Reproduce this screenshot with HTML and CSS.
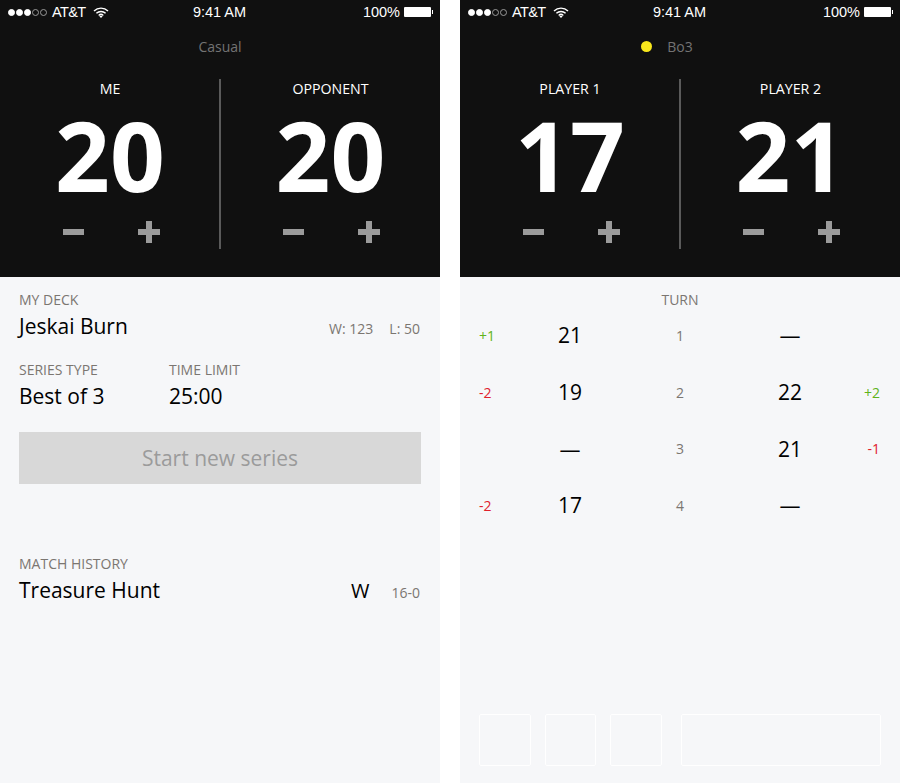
FILE: index.html
```html
<!DOCTYPE html>
<html lang="en">
<head>
  <meta charset="UTF-8">
  <title>Life Counter</title>
  <link rel="stylesheet" href="styles.css">
</head>
<body>
  <div class="phones">

    <div class="phone">
      <div class="top">
        <div class="status">
          <div class="status-left">
            <span class="signal"><i class="on"></i><i class="on"></i><i class="on"></i><i></i><i></i></span>
            <span class="carrier">AT&amp;T</span>
            <svg class="wifi" width="16" height="11" viewBox="0 0 16 11"><path d="M1 4 A10 10 0 0 1 15 4 M3.4 6.3 A6.6 6.6 0 0 1 12.6 6.3 M5.7 8.4 A3.3 3.3 0 0 1 10.3 8.4" fill="none" stroke="#fff" stroke-width="1.4"/><path d="M8 11 L6.4 9.3 A2.3 2.3 0 0 1 9.6 9.3 Z" fill="#fff"/></svg>
          </div>
          <div class="status-time">9:41 AM</div>
          <div class="status-right">
            <span>100%</span>
            <span class="battery"></span>
          </div>
        </div>
        <div class="mode">Casual</div>
        <div class="scores">
          <div class="player">
            <div class="player-name">ME</div>
            <div class="life">20</div>
            <div class="steps">
              <svg width="22" height="22" viewBox="0 0 22 22"><rect x="0" y="8" width="21" height="6" fill="#9b9b9b"/></svg>
              <svg width="22" height="22" viewBox="0 0 22 22"><path d="M8 0h6v8h8v6h-8v8H8v-8H0V8h8z" fill="#9b9b9b"/></svg>
            </div>
          </div>
          <div class="player">
            <div class="player-name">OPPONENT</div>
            <div class="life">20</div>
            <div class="steps">
              <svg width="22" height="22" viewBox="0 0 22 22"><rect x="0" y="8" width="21" height="6" fill="#9b9b9b"/></svg>
              <svg width="22" height="22" viewBox="0 0 22 22"><path d="M8 0h6v8h8v6h-8v8H8v-8H0V8h8z" fill="#9b9b9b"/></svg>
            </div>
          </div>
        </div>
      </div>

      <div class="panel">
        <div class="field">
          <div class="label">MY DECK</div>
          <div class="row">
            <div class="value">Jeskai Burn</div>
            <div class="record"><span>W: 123</span><span>L: 50</span></div>
          </div>
        </div>
        <div class="field-pair">
          <div class="field">
            <div class="label">SERIES TYPE</div>
            <div class="value">Best of 3</div>
          </div>
          <div class="field">
            <div class="label">TIME LIMIT</div>
            <div class="value">25:00</div>
          </div>
        </div>
        <button class="start" disabled>Start new series</button>
        <div class="field history">
          <div class="label">MATCH HISTORY</div>
          <div class="row">
            <div class="value">Treasure Hunt</div>
            <div class="result"><span class="result-letter">W</span><span class="record">16-0</span></div>
          </div>
        </div>
      </div>
    </div>

    <div class="phone">
      <div class="top">
        <div class="status">
          <div class="status-left">
            <span class="signal"><i class="on"></i><i class="on"></i><i class="on"></i><i></i><i></i></span>
            <span class="carrier">AT&amp;T</span>
            <svg class="wifi" width="16" height="11" viewBox="0 0 16 11"><path d="M1 4 A10 10 0 0 1 15 4 M3.4 6.3 A6.6 6.6 0 0 1 12.6 6.3 M5.7 8.4 A3.3 3.3 0 0 1 10.3 8.4" fill="none" stroke="#fff" stroke-width="1.4"/><path d="M8 11 L6.4 9.3 A2.3 2.3 0 0 1 9.6 9.3 Z" fill="#fff"/></svg>
          </div>
          <div class="status-time">9:41 AM</div>
          <div class="status-right">
            <span>100%</span>
            <span class="battery"></span>
          </div>
        </div>
        <div class="mode"><span class="dot"></span>Bo3</div>
        <div class="scores">
          <div class="player">
            <div class="player-name">PLAYER 1</div>
            <div class="life">17</div>
            <div class="steps">
              <svg width="22" height="22" viewBox="0 0 22 22"><rect x="0" y="8" width="21" height="6" fill="#9b9b9b"/></svg>
              <svg width="22" height="22" viewBox="0 0 22 22"><path d="M8 0h6v8h8v6h-8v8H8v-8H0V8h8z" fill="#9b9b9b"/></svg>
            </div>
          </div>
          <div class="player">
            <div class="player-name">PLAYER 2</div>
            <div class="life">21</div>
            <div class="steps">
              <svg width="22" height="22" viewBox="0 0 22 22"><rect x="0" y="8" width="21" height="6" fill="#9b9b9b"/></svg>
              <svg width="22" height="22" viewBox="0 0 22 22"><path d="M8 0h6v8h8v6h-8v8H8v-8H0V8h8z" fill="#9b9b9b"/></svg>
            </div>
          </div>
        </div>
      </div>

      <div class="panel panel-turns">
        <div class="turn-title">TURN</div>
        <div class="turns">
          <div class="turn">
            <span class="delta up">+1</span><span class="total">21</span><span class="turn-no">1</span><span class="total">—</span><span class="delta"></span>
          </div>
          <div class="turn">
            <span class="delta down">-2</span><span class="total">19</span><span class="turn-no">2</span><span class="total">22</span><span class="delta up">+2</span>
          </div>
          <div class="turn">
            <span class="delta"></span><span class="total">—</span><span class="turn-no">3</span><span class="total">21</span><span class="delta down">-1</span>
          </div>
          <div class="turn">
            <span class="delta down">-2</span><span class="total">17</span><span class="turn-no">4</span><span class="total">—</span><span class="delta"></span>
          </div>
        </div>
        <div class="slots">
          <div class="slot"></div>
          <div class="slot"></div>
          <div class="slot"></div>
          <div class="slot slot-wide"></div>
        </div>
      </div>
    </div>

  </div>
</body>
</html>
```

FILE: styles.css
```css
body {
  margin: 0;
  background: #ffffff;
  font-family: 'Open Sans', sans-serif;
}

.phones {
  display: flex;
  gap: 20px;
  height: 783px;
}

.phone {
  width: 440px;
  display: flex;
  flex-direction: column;
}

/* dark score area */
.top {
  background: #101010;
  height: 277px;
  box-sizing: border-box;
  color: #ffffff;
}

.status {
  display: grid;
  grid-template-columns: 1fr auto 1fr;
  align-items: center;
  height: 24px;
  padding: 0 7px 0 8px;
  font-family: 'Liberation Sans', Arial, sans-serif;
  font-size: 14.5px;
}

.status-left {
  display: flex;
  align-items: center;
}

.status-time {
  margin-left: -2px;
}

.signal {
  display: flex;
  gap: 1px;
  margin-right: 5px;
}

.signal i {
  width: 7px;
  height: 7px;
  box-sizing: border-box;
  border: 1px solid #9a9a9a;
  border-radius: 50%;
}

.signal i.on {
  background: #ffffff;
  border-color: #ffffff;
}

.carrier {
  letter-spacing: -0.6px;
}

.wifi {
  margin-left: 7px;
}

.status-right {
  display: flex;
  align-items: center;
  justify-content: flex-end;
  gap: 4px;
}

.battery {
  position: relative;
  width: 27px;
  height: 10px;
  margin-right: 2px;
  box-sizing: border-box;
  background: #ffffff;
  border-radius: 1px;
}

.battery::after {
  content: "";
  position: absolute;
  left: 28px;
  top: 3px;
  width: 1px;
  height: 4px;
  background: #ffffff;
}

.mode {
  display: flex;
  justify-content: center;
  align-items: center;
  height: 20px;
  margin-top: 12px;
  font-size: 14px;
  color: #737373;
}

.dot {
  width: 11px;
  height: 11px;
  margin-left: -26px;
  margin-right: 15px;
  border-radius: 50%;
  background: #f8e71c;
}

.scores {
  display: grid;
  grid-template-columns: 1fr 1fr;
  margin-top: 23px;
}

.player {
  height: 170px;
  text-align: center;
}

.player + .player {
  border-left: 2px solid #5a5a5a;
  margin-left: -1px;
}

.player-name {
  font-size: 14.2px;
  font-weight: 500;
  line-height: 20px;
}

.life {
  font-size: 96px;
  font-weight: 700;
  line-height: 110px;
  margin-top: 1px;
}

.steps {
  display: flex;
  justify-content: center;
  gap: 53px;
  margin-top: 11px;
  padding-left: 3px;
}

.player + .player .steps {
  padding-left: 1px;
}

/* light lower area */
.panel {
  flex: 1;
  background: #f6f7f9;
  padding: 13px 20px 0 19px;
}

.label {
  font-size: 14px;
  line-height: 20px;
  color: #7b7671;
}

.value {
  font-size: 21px;
  line-height: 32px;
  color: #000000;
}

.row {
  display: flex;
  justify-content: space-between;
  align-items: baseline;
}

.record {
  font-size: 14px;
  color: #7b7671;
}

.row > .record span + span {
  margin-left: 16px;
}

.field-pair {
  display: flex;
  margin-top: 18px;
}

.field-pair .field {
  width: 150px;
}

.start {
  display: block;
  width: 402px;
  height: 52px;
  margin-top: 20px;
  border: none;
  background: #d8d8d8;
  color: #9b9b9b;
  font-family: inherit;
  font-size: 21px;
}

.history {
  margin-top: 70px;
}

.result {
  display: flex;
  align-items: baseline;
  gap: 22px;
}

.result-letter {
  font-size: 20px;
  color: #000000;
}

/* turn log */
.panel-turns {
  display: flex;
  flex-direction: column;
  padding-right: 19px;
}

.turn-title {
  font-size: 14px;
  line-height: 20px;
  color: #7b7671;
  text-align: center;
}

.turns {
  margin-top: -3px;
}

.turn {
  display: grid;
  grid-template-columns: 31px 120px 100px 120px 31px;
  align-items: center;
  height: 56.7px;
}

.total {
  font-size: 21px;
  color: #000000;
  text-align: center;
}

.turn-no {
  font-size: 14px;
  color: #7b7671;
  text-align: center;
}

.delta {
  font-size: 14px;
}

.turn .delta:last-child {
  text-align: right;
  padding-right: 1px;
}

.up {
  color: #5fb31a;
}

.down {
  color: #e0212c;
}

.slots {
  display: flex;
  gap: 14px;
  margin-top: auto;
  margin-bottom: 17px;
}

.slot {
  width: 52px;
  height: 52px;
  box-sizing: border-box;
  border: 1px solid #ffffff;
  border-radius: 2px;
}

.slot-wide {
  width: 201px;
  margin-left: 5px;
}
```
